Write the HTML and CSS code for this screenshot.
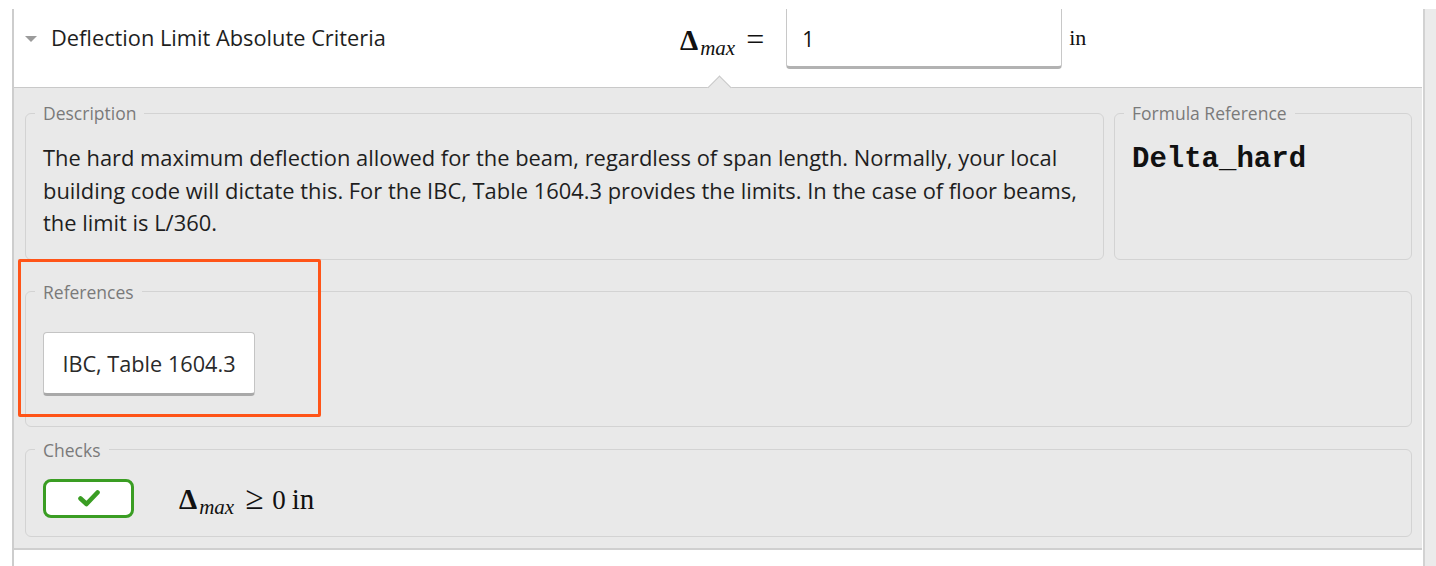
FILE: index.html
```html
<!DOCTYPE html>
<html lang="en">
<head>
<meta charset="utf-8">
<title>Deflection Limit Absolute Criteria</title>
<link rel="stylesheet" href="styles.css">
</head>
<body>
<div class="shell">
  <div class="rail-left"></div>
  <section class="card">
    <header class="card-head">
      <div class="title-col">
        <span class="caret"></span>
        <h2 class="title">Deflection Limit Absolute Criteria</h2>
      </div>
      <div class="eq">
        <span class="math"><span class="delta">Δ</span><span class="sub">max</span><span class="rel">=</span></span>
        <div class="input">1</div>
        <span class="unit">in</span>
      </div>
    </header>
    <div class="card-body">
      <div class="row">
        <fieldset class="box">
          <legend class="lbl">Description</legend>
          <p class="desc">The hard maximum deflection allowed for the beam, regardless of span length. Normally, your local building code will dictate this. For the IBC, Table 1604.3 provides the limits. In the case of floor beams, the limit is L/360.</p>
        </fieldset>
        <fieldset class="box">
          <legend class="lbl">Formula Reference</legend>
          <p class="code">Delta_hard</p>
        </fieldset>
      </div>
      <fieldset class="box refs">
        <legend class="lbl">References</legend>
        <div class="ref-btn">IBC, Table 1604.3</div>
      </fieldset>
      <fieldset class="box checks">
        <legend class="lbl">Checks</legend>
        <div class="check-row">
          <span class="badge">
            <svg width="24" height="18" viewBox="0 0 24 18"><path d="M3.5 9.5 L9.5 15 L20.5 3.5" fill="none" stroke="#3a9d23" stroke-width="4.6" stroke-linecap="round" stroke-linejoin="round"/></svg>
          </span>
          <span class="math check-math"><span class="delta">Δ</span><span class="sub">max</span><span class="rel">≥</span><span class="num">0</span><span class="unit2">in</span></span>
        </div>
      </fieldset>
    </div>
  </section>
  <div class="rail-right"></div>
</div>
<div class="annot"></div>
</body>
</html>
```

FILE: styles.css
```css
html, body {
  margin: 0;
  padding: 0;
  background: #ffffff;
}
body {
  font-family: "Open Sans", "Noto Sans", sans-serif;
  color: #222;
  position: relative;
  height: 566px;
  overflow: hidden;
}
.shell {
  display: flex;
  height: 566px;
  padding-left: 12px;
}
.rail-left {
  width: 2px;
  margin-top: 9px;
  background: #cdcdcd;
}
.card {
  width: 1408px;
  flex: none;
}
.rail-right {
  flex: 1;
  margin-top: 9px;
  margin-left: 1px;
  border-left: 2px solid #d2d2d2;
  background: #ebebeb;
}
.card-head {
  height: 88px;
  box-sizing: border-box;
  border-bottom: 1px solid #c9c9c9;
  padding-top: 9px;
  display: flex;
  align-items: flex-start;
}
.title-col {
  width: 666px;
  height: 60px;
  padding-left: 11px;
  box-sizing: border-box;
  display: flex;
  align-items: center;
  padding-bottom: 3px;
}
.caret {
  width: 0;
  height: 0;
  border-left: 6px solid transparent;
  border-right: 6px solid transparent;
  border-top: 6px solid #9b9b9b;
  margin-right: 14px;
  margin-top: 2px;
}
.title {
  margin: 0;
  font-size: 21.8px;
  font-weight: 400;
  color: #1e1e1e;
}
.eq {
  display: flex;
  align-items: center;
  height: 60px;
}
.math {
  font-family: "Liberation Serif", "DejaVu Serif", serif;
  color: #111;
  display: inline-flex;
  align-items: baseline;
}
.delta {
  font-size: 29px;
  font-weight: 700;
}
.sub {
  font-size: 21px;
  font-style: italic;
  position: relative;
  top: 5px;
  margin-left: 2px;
}
.rel {
  font-size: 32px;
  margin-left: 11px;
}
.input {
  margin-left: 22px;
  width: 276px;
  height: 60px;
  box-sizing: border-box;
  background: #fff;
  border: 1px solid #c8c8c8;
  border-top: none;
  border-bottom: 3px solid #b2b2b2;
  border-radius: 0 0 4px 4px;
  padding-left: 15px;
  display: flex;
  align-items: center;
  font-size: 21px;
  color: #111;
  padding-top: 2px;
}
.unit {
  margin-left: 7px;
  font-family: "Liberation Serif", "DejaVu Serif", serif;
  font-size: 22px;
  color: #111;
  margin-bottom: 2px;
}
.card-body {
  position: relative;
  background: #e9e9e9;
  padding: 14px 10px 11px 11px;
  border-bottom: 2px solid #cfcfcf;
}
.card-body::before {
  content: "";
  position: absolute;
  left: 697px;
  top: -9px;
  width: 16px;
  height: 16px;
  background: #e9e9e9;
  border-top: 1px solid #c9c9c9;
  border-left: 1px solid #c9c9c9;
  transform: rotate(45deg);
}
.row {
  display: grid;
  grid-template-columns: 1fr 298px;
  gap: 10px;
}
.box {
  margin: 0;
  min-width: 0;
  border: 1px solid #d3d3d3;
  border-radius: 6px;
  padding: 0 17px 19px;
}
.lbl {
  font-size: 17.5px;
  line-height: 22px;
  color: #7a7a7a;
  padding: 0 8px;
  margin-left: -8px;
}
.desc {
  margin: 18px 0 0;
  font-size: 21.9px;
  line-height: 32.5px;
  color: #1e1e1e;
}
.code {
  margin: 20px 0 0;
  font-family: "Liberation Mono", "DejaVu Sans Mono", monospace;
  font-weight: 700;
  font-size: 29px;
  line-height: 32.5px;
  color: #111;
}
.refs {
  margin-top: 21px;
  padding-bottom: 30px;
}
.ref-btn {
  margin-top: 29px;
  width: 212px;
  height: 64px;
  box-sizing: border-box;
  background: #fff;
  border: 1px solid #c4c4c4;
  border-bottom: 3px solid #a9a9a9;
  border-radius: 4px;
  display: flex;
  align-items: center;
  justify-content: center;
  font-size: 21.7px;
  color: #2a2a2a;
  padding-top: 2px;
}
.checks {
  margin-top: 12px;
  padding-bottom: 18px;
}
.check-row {
  margin-top: 18px;
  display: flex;
  align-items: center;
}
.badge {
  width: 91px;
  height: 39px;
  box-sizing: border-box;
  border: 3px solid #3a9d23;
  border-radius: 8px;
  background: #fff;
  display: flex;
  align-items: center;
  justify-content: center;
}
.check-math {
  margin-left: 45px;
}
.check-math .sub {
  font-size: 21px;
}
.check-math .rel {
  font-size: 33px;
  margin-left: 11px;
}
.num {
  font-size: 27px;
  margin-left: 9px;
}
.unit2 {
  font-size: 29px;
  margin-left: 6px;
}
.annot {
  position: absolute;
  left: 18px;
  top: 259px;
  width: 303px;
  height: 158px;
  box-sizing: border-box;
  border: 3px solid #ff5418;
  border-radius: 2px;
  pointer-events: none;
}
```
